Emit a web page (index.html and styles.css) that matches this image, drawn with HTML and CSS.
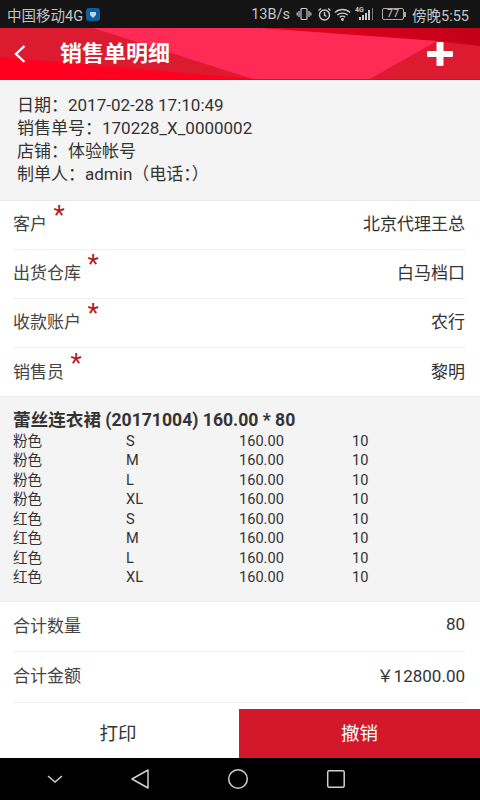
FILE: index.html
```html
<!DOCTYPE html>
<html lang="zh">
<head>
<meta charset="utf-8">
<title>销售单明细</title>
<link rel="stylesheet" href="styles.css">
</head>
<body>
<div class="screen">
  <div class="statusbar">
    <div class="carrier">中国移动4G<svg class="shield" width="14" height="13" viewBox="0 0 14 13"><rect width="14" height="13" rx="3" fill="#0f5f9c"/><path d="M4 4h6v3l-3 3-3-3z" fill="#b9d6ea"/></svg></div>
    <div class="status-right">
      <span class="speed">13B/s</span>
      <svg class="ic-vibrate" width="16" height="14" viewBox="0 0 16 14" fill="none" stroke="#c8c8c8" stroke-width="1.200"><rect x="5" y="1.500" width="6" height="11" rx="1"/><path d="M3 4v6M1.200 5.500v3M13 4v6M14.800 5.500v3"/></svg>
      <svg class="ic-alarm" width="15" height="15" viewBox="0 0 15 15" fill="none" stroke="#c8c8c8" stroke-width="1.400"><circle cx="7.500" cy="8" r="5"/><path d="M7.500 5v3.200l2 1.300M1.500 3.500l2.500-2M13.500 3.500l-2.500-2"/></svg>
      <svg class="ic-wifi" width="17" height="13" viewBox="0 0 17 13" fill="none" stroke="#c8c8c8" stroke-width="1.300"><path d="M1 4.500c4-4 11-4 15 0M3.300 7c3-2.600 7.400-2.600 10.400 0M5.700 9.300c1.600-1.300 4-1.300 5.600 0"/><circle cx="8.500" cy="11.500" r=".8" fill="#c8c8c8"/></svg>
      <div class="signal">
        <span class="signal-tag">4G</span>
        <svg width="20" height="14" viewBox="0 0 20 14" fill="#c8c8c8"><rect x="4" y="10" width="2" height="3"/><rect x="7" y="8" width="2" height="5"/><rect x="10" y="6" width="2" height="7"/><rect x="13" y="3" width="2" height="10"/><rect x="17" y="1" width="1" height="12" fill="#777"/></svg>
      </div>
      <div class="battery"><span class="battery-body">77</span><span class="battery-tip"></span></div>
      <span>傍晚5:55</span>
    </div>
  </div>

  <header class="appbar">
    <svg class="appbar-bg" viewBox="0 0 480 52" preserveAspectRatio="none">
      <defs>
        <linearGradient id="topband" x1="0" y1="0" x2="1" y2="0">
          <stop offset="0" stop-color="#ea0420"/>
          <stop offset="1" stop-color="#c20018"/>
        </linearGradient>
      </defs>
      <rect width="480" height="52" fill="#dc1a30"/>
      <polygon points="255,0 480,0 480,18 437,13" fill="url(#topband)"/>
      <polygon points="93,0 260,0 437,13 368,52 255,52 240,47" fill="#ff2a55"/>
      <polygon points="0,29 255,51 255,52 0,52" fill="#ff0020"/>
      <rect y="51" width="480" height="1" fill="#f8001c"/>
    </svg>
    <svg class="back" width="13" height="20" viewBox="0 0 13 20" fill="none" stroke="#fff" stroke-width="2.400"><path d="M11.500 2 3 10l8.500 8"/></svg>
    <h1 class="title">销售单明细</h1>
    <svg class="plus" width="26" height="24" viewBox="0 0 26 24" fill="#fff"><rect y="9" width="26" height="6" rx="1"/><rect x="9.500" width="7" height="24" rx="1"/></svg>
  </header>

  <section class="info">
    <p>日期：2017-02-28 17:10:49</p>
    <p>销售单号：170228_X_0000002</p>
    <p>店铺：体验帐号</p>
    <p>制单人：admin（电话：）</p>
  </section>

  <section class="fields">
    <div class="row"><span class="label">客户<i class="star">*</i></span><span>北京代理王总</span></div>
    <div class="row"><span class="label">出货仓库<i class="star">*</i></span><span>白马档口</span></div>
    <div class="row"><span class="label">收款账户<i class="star">*</i></span><span>农行</span></div>
    <div class="row"><span class="label">销售员<i class="star">*</i></span><span>黎明</span></div>
  </section>

  <section class="items">
    <h2 class="item-title">蕾丝连衣裙 (20171004) 160.00 * 80</h2>
    <div class="item"><span>粉色</span><span>S</span><span>160.00</span><span>10</span></div>
    <div class="item"><span>粉色</span><span>M</span><span>160.00</span><span>10</span></div>
    <div class="item"><span>粉色</span><span>L</span><span>160.00</span><span>10</span></div>
    <div class="item"><span>粉色</span><span>XL</span><span>160.00</span><span>10</span></div>
    <div class="item"><span>红色</span><span>S</span><span>160.00</span><span>10</span></div>
    <div class="item"><span>红色</span><span>M</span><span>160.00</span><span>10</span></div>
    <div class="item"><span>红色</span><span>L</span><span>160.00</span><span>10</span></div>
    <div class="item"><span>红色</span><span>XL</span><span>160.00</span><span>10</span></div>
  </section>

  <section class="totals">
    <div class="row"><span class="label">合计数量</span><span>80</span></div>
    <div class="row"><span class="label">合计金额</span><span>￥12800.00</span></div>
  </section>

  <div class="actions">
    <div class="action action-plain">打印</div>
    <div class="action action-primary">撤销</div>
  </div>

  <nav class="navbar">
    <svg class="nav-chevron" width="18" height="10" viewBox="0 0 18 10" fill="none" stroke="#d0d0d0" stroke-width="1.500"><path d="M2 2l7 6 7-6"/></svg>
    <svg width="20" height="22" viewBox="0 0 20 22" fill="none" stroke="#d0d0d0" stroke-width="1.500" stroke-linejoin="round"><path d="M18 2v18L2 11z"/></svg>
    <svg width="22" height="22" viewBox="0 0 22 22" fill="none" stroke="#d0d0d0" stroke-width="1.500"><circle cx="11" cy="11" r="9.300"/></svg>
    <svg width="20" height="20" viewBox="0 0 20 20" fill="none" stroke="#d0d0d0" stroke-width="1.500"><rect x="1.700" y="1.700" width="16.500" height="16.500" rx="1.500"/></svg>
  </nav>
</div>
</body>
</html>
```
FILE: styles.css
```css
* { box-sizing: border-box; }
html, body { margin: 0; padding: 0; }
body {
  width: 480px;
  height: 800px;
  overflow: hidden;
  background: #fff;
  font-family: Roboto, "Noto Sans CJK SC", sans-serif;
  color: #333;
}
.screen { width: 480px; height: 800px; display: flex; flex-direction: column; }

.statusbar {
  flex: none;
  height: 28px;
  background: #141414;
  color: #c4c4c4;
  font-size: 14.500px;
  display: flex;
  align-items: center;
  justify-content: space-between;
  padding: 0 11px 0 7px;
}
.carrier { display: flex; align-items: center; gap: 3px; }
.status-right { display: flex; align-items: center; }
.ic-vibrate { margin-left: 6px; }
.ic-alarm { margin-left: 5px; }
.ic-wifi { margin-left: 2px; }
.signal { position: relative; display: flex; width: 20px; margin-left: 4px; }
.signal-tag {
  position: absolute;
  left: 0;
  top: -1px;
  font-size: 7px;
  line-height: 8px;
  font-weight: 700;
}
.battery { display: flex; align-items: center; margin: 0 6px 0 7px; }
.battery-body {
  width: 22px; height: 12px;
  border: 1px solid #aaa;
  border-radius: 2px;
  font-size: 11px;
  line-height: 10px;
  text-align: center;
}
.battery-tip { width: 2px; height: 5px; background: #aaa; }

.appbar {
  flex: none;
  position: relative;
  height: 52px;
  overflow: hidden;
  display: flex;
  align-items: center;
  padding: 0 27px 0 13px;
}
.appbar-bg { position: absolute; inset: 0; width: 100%; height: 100%; }
.back, .title, .plus { position: relative; }
.title { margin: 0 0 0 34px; padding-bottom: 6px; font-size: 22px; font-weight: 700; color: #fff; flex: 1; }

.info {
  flex: none;
  height: 121px;
  background: #f4f4f4;
  border-bottom: 1px solid #e8e8e8;
  padding: 14px 0 0 17px;
  font-size: 17px;
  line-height: 23px;
  color: #333;
}
.info p { margin: 0; }

.fields { flex: none; padding: 0 15px 0 13px; }
.row {
  height: 49px;
  display: flex;
  align-items: center;
  justify-content: space-between;
  padding-bottom: 6px;
  font-size: 17px;
  border-bottom: 1px solid #eee;
}
.fields .row:last-child { border-bottom: 0; height: 48px; padding-bottom: 4px; }
.label { color: #444; display: flex; align-items: center; }
.star {
  font-style: normal;
  color: #b01c26;
  font-size: 26px;
  line-height: 20px;
  margin: -14px 0 0 6.500px;
  height: 20px;
}

.items {
  flex: none;
  height: 206px;
  background: #f4f4f4;
  padding: 13px 13px 0;
  border-top: 1px solid #eee;
  border-bottom: 1px solid #eee;
}
.item-title { margin: 0 0 1.600px; font-size: 17.600px; line-height: 20px; font-weight: 700; color: #333; }
.item {
  display: grid;
  grid-template-columns: 113px 113px 113px 1fr;
  font-size: 14.600px;
  line-height: 19.500px;
  color: #333;
}

.totals { flex: none; padding: 0 15px 0 13px; height: 107px; }
.totals .row { height: 50px; padding-bottom: 5px; }
.totals .row:last-child { height: 51px; padding-bottom: 6px; }

.actions { flex: none; display: flex; height: 49px; }
.action {
  display: flex;
  align-items: center;
  justify-content: center;
  font-size: 18.500px;
  padding-bottom: 4px;
}
.action-plain { width: 239px; color: #333; padding-right: 3px; }
.action-primary { flex: 1; background: #d2182a; color: #fff; }

.navbar {
  flex: none;
  height: 42px;
  background: #000;
  display: flex;
  align-items: center;
  padding-left: 46px;
  gap: 77px;
}
.nav-chevron { margin-right: -11px; }
```
